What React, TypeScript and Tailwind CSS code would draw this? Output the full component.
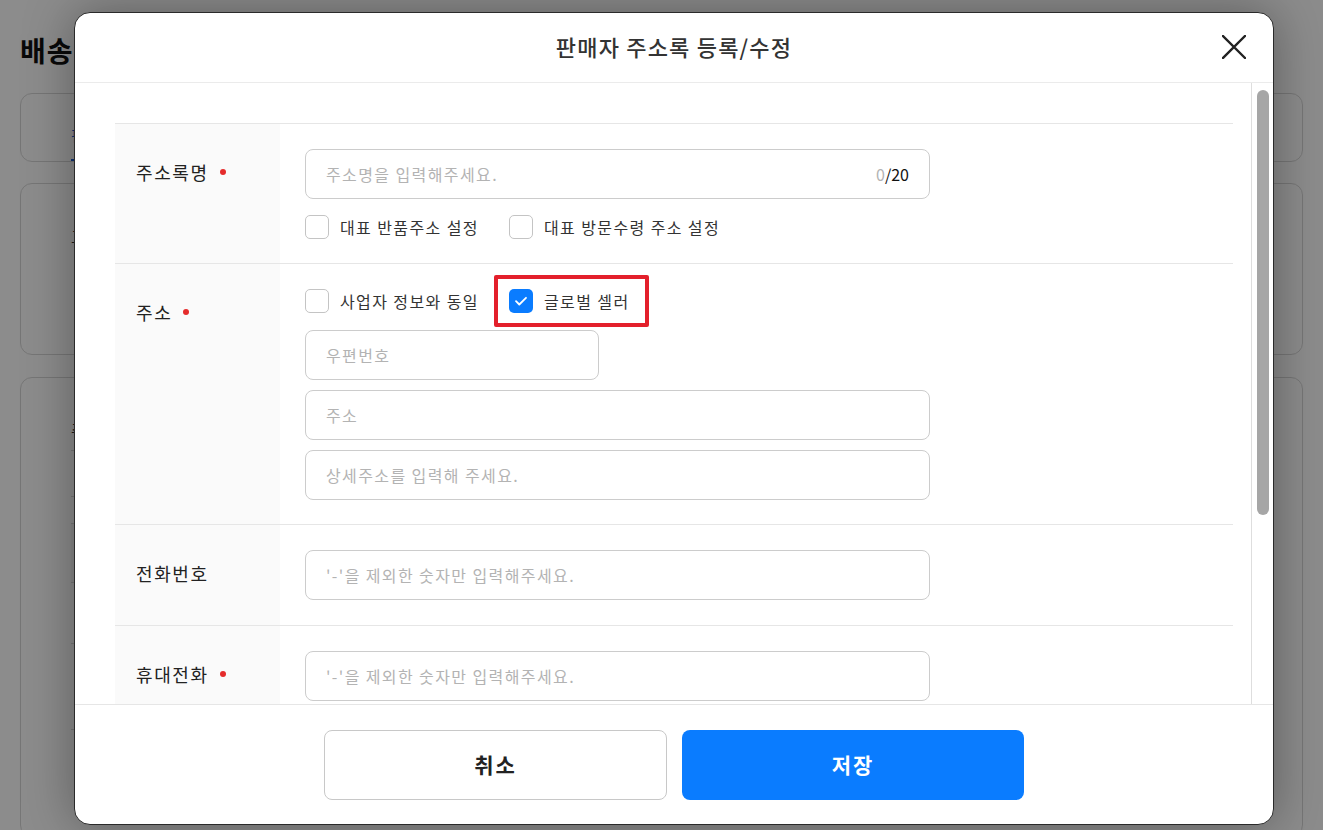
import type { ReactNode } from 'react'

const font = "font-['Noto_Sans_CJK_KR','Noto_Sans',sans-serif]"

function Check({ checked = false, label }: { checked?: boolean; label: string }) {
  return (
    <label className="flex items-center gap-[11px] text-[16px] leading-6 tracking-[1.4px] text-[#333]">
      {checked ? (
        <span className="w-6 h-6 rounded-[5px] bg-[#0a7cff] flex items-center justify-center">
          <svg width="16" height="16" viewBox="0 0 16 16" fill="none">
            <path d="M3 8.2l3.3 3.3L13 4.8" stroke="#fff" strokeWidth="1.8" strokeLinecap="round" strokeLinejoin="round" />
          </svg>
        </span>
      ) : (
        <span className="w-6 h-6 rounded-[5px] border border-[#c4c4c4] bg-white" />
      )}
      {label}
    </label>
  )
}

function Field({ placeholder, className = 'w-[625px]', right }: { placeholder: string; className?: string; right?: ReactNode }) {
  return (
    <div className={`${className} h-[50px] rounded-lg border border-[#cccccc] bg-white flex items-center px-5`}>
      <input
        readOnly
        placeholder={placeholder}
        className="flex-1 min-w-0 bg-transparent outline-none text-[16px] tracking-[1.4px] text-[#333] placeholder:text-[#b3b3b3]"
      />
      {right}
    </div>
  )
}

function Row({ label, required, children, pb = 'pb-[25px]' }: { label: string; required?: boolean; children: ReactNode; pb?: string }) {
  return (
    <div className="flex border-b border-[#e6e6e6]">
      <div className="w-[165px] shrink-0 bg-[#fafafa] pl-[21px] pt-[35px] flex items-start gap-[11px] text-[18px] leading-[26px] tracking-[1.6px] text-[#222]">
        {label}
        {required && <span className="mt-[10px] w-[6px] h-[6px] rounded-full bg-[#e52b2b]" />}
      </div>
      <div className={`flex-1 pl-[25px] pt-[25px] ${pb} flex flex-col`}>{children}</div>
    </div>
  )
}

function Background() {
  return (
    <div className="min-h-[830px] bg-white px-5 pt-[30px]">
      <h1 className="text-[28px] font-bold text-[#111] leading-10 tracking-[1px]">배송지 관리</h1>
      <div className="mt-[23px] h-[69px] rounded-xl border border-[#d8d8d8] flex items-end px-[50px]">
        <span className="pb-3 border-b-2 border-[#1f5fd6] text-[#1f5fd6] text-[16px]">판매자 주소록</span>
      </div>
      <div className="mt-[21px] h-[172px] rounded-xl border border-[#d8d8d8] px-[50px] pt-[40px] text-[16px] text-[#333]">
        고객 안내
      </div>
      <div className="mt-[22px] h-[460px] rounded-xl border border-[#d8d8d8] px-[50px] pt-[40px] text-[16px] text-[#333]">
        <div className="h-[33px] border-b border-[#d8d8d8]">주소록</div>
        <div className="h-[46px] border-b border-[#d8d8d8] flex items-center justify-end pr-2">상세 페이지에 2개 노출</div>
        <div className="h-[27px] border-b border-[#d8d8d8]" />
        <div className="h-[59px] border-b border-[#d8d8d8] bg-[#f7f7f7] flex items-center justify-end pr-2">전화번호</div>
        <div className="h-[61px] border-b border-[#d8d8d8]" />
        <div className="h-[86px] border-b border-[#d8d8d8]" />
      </div>
    </div>
  )
}

export default function App() {
  return (
    <div className={`${font} relative w-[1323px] h-[830px] overflow-hidden`}>
      <Background />
      <div className="absolute inset-0 bg-black/45" />
      <div className="absolute left-[74px] top-[12px] w-[1200px] h-[813px] bg-white rounded-2xl border border-[#2a2a2a] shadow-[0_0_50px_rgba(0,0,0,0.35)] flex flex-col overflow-hidden">
        <div className="h-[70px] shrink-0 border-b border-[#ebebeb] relative flex items-center justify-center">
          <h2 className="text-[22px] font-medium tracking-[1.2px] text-[#333] -mt-[3px]">판매자 주소록 등록/수정</h2>
          <button className="absolute right-[27px] top-[22px] w-6 h-6">
            <svg width="24" height="24" viewBox="0 0 24 24" fill="none">
              <path d="M1 1L23 23M23 1L1 23" stroke="#222" strokeWidth="2.4" strokeLinecap="square" />
            </svg>
          </button>
        </div>

        <div className="relative flex-1 overflow-hidden">
          <div className="px-10 pt-10">
            <div className="border-t border-[#e6e6e6]">
              <Row label="주소록명" required pb="pb-[24px]">
                <Field placeholder="주소명을 입력해주세요." right={<span className="text-[16px] text-[#111]"><span className="text-[#b3b3b3]">0</span>/20</span>} />
                <div className="mt-4 flex items-center gap-[30px]">
                  <Check label="대표 반품주소 설정" />
                  <Check label="대표 방문수령 주소 설정" />
                </div>
              </Row>
              <Row label="주소" required pb="pb-[24px]">
                <div className="flex items-center gap-[30px]">
                  <Check label="사업자 정보와 동일" />
                  <div className="relative">
                    <Check checked label="글로벌 셀러" />
                    <div className="absolute -left-[15px] -top-[14px] w-[155px] h-[52px] border-4 border-[#e3202b] rounded-[2px]" />
                  </div>
                </div>
                <div className="mt-[17px] flex flex-col gap-[10px]">
                  <Field placeholder="우편번호" className="w-[294px]" />
                  <Field placeholder="주소" />
                  <Field placeholder="상세주소를 입력해 주세요." />
                </div>
              </Row>
              <Row label="전화번호">
                <Field placeholder="'-'을 제외한 숫자만 입력해주세요." />
              </Row>
              <Row label="휴대전화" required>
                <Field placeholder="'-'을 제외한 숫자만 입력해주세요." />
              </Row>
            </div>
          </div>
          <div className="absolute right-0 top-0 bottom-0 w-[22px] border-l border-[#dedede] bg-white">
            <div className="absolute left-[5px] top-[7px] w-[12px] h-[425px] rounded-full bg-[#a6a6a6]" />
          </div>
        </div>

        <div className="h-[120px] shrink-0 border-t border-[#e6e6e6] flex items-center justify-center gap-[15px]">
          <button className="w-[343px] h-[70px] rounded-lg border border-[#c8c8c8] bg-white text-[21px] tracking-[2px] font-bold text-[#222]">취소</button>
          <button className="w-[342px] h-[70px] rounded-lg bg-[#0a7cff] text-[21px] tracking-[2px] font-bold text-white">저장</button>
        </div>
      </div>
    </div>
  )
}
